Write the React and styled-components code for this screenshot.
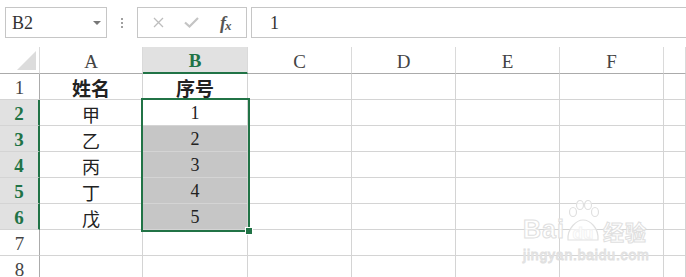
import React from "react"
import styled, { createGlobalStyle } from "styled-components"

const GREEN = "#217346"
const GRID = "#d4d4d4"
const SERIF = `"Liberation Serif", "Noto Sans CJK SC", serif`

const GlobalStyle = createGlobalStyle`
  html, body {
    margin: 0;
    padding: 0;
    background: #fff;
    overflow: hidden;
  }
  body {
    font-family: ${SERIF};
    color: #333;
  }
`

const Page = styled.div`
  position: relative;
  width: 686px;
  height: 277px;
  overflow: hidden;
`

const FormulaBar = styled.div`
  display: flex;
  align-items: stretch;
  height: 31px;
  padding: 7px 0 0 5px;
  box-sizing: content-box;
`

const NameBox = styled.div`
  width: 102px;
  box-sizing: border-box;
  border: 1px solid #c6c6c6;
  display: flex;
  align-items: center;
  justify-content: space-between;
  padding: 1px 5px 0 6px;
  font-size: 18px;
  color: #333;
`

const DropArrow = styled.span`
  width: 0;
  height: 0;
  border-left: 4px solid transparent;
  border-right: 4px solid transparent;
  border-top: 4px solid #777;
`

const Grip = styled.div`
  width: 30px;
  display: flex;
  flex-direction: column;
  align-items: center;
  justify-content: center;
  gap: 2px;
  span {
    width: 2px;
    height: 2px;
    background: #a0a0a0;
  }
`

const ButtonBox = styled.div`
  width: 110px;
  box-sizing: border-box;
  border: 1px solid #c6c6c6;
  display: flex;
  align-items: center;
  justify-content: space-around;
  padding: 0 4px;
`

const IconButton = styled.span`
  display: flex;
  align-items: center;
  justify-content: center;
  width: 28px;
  height: 20px;
`

const Fx = styled.span`
  font-family: ${SERIF};
  font-style: italic;
  font-weight: 700;
  font-size: 18px;
  line-height: 1;
  color: #555;
  letter-spacing: -1px;
  sub {
    font-size: 13px;
    vertical-align: -1px;
  }
`

const FormulaInput = styled.div`
  flex: 1;
  margin-left: 4px;
  box-sizing: border-box;
  border: 1px solid #c6c6c6;
  border-right: none;
  display: flex;
  align-items: center;
  padding: 1px 0 0 18px;
  font-size: 18px;
  color: #333;
`

const Sheet = styled.div`
  margin-top: 9px;
  display: grid;
  grid-template-columns: 40px 103px 105px 104px 104px 104px 104px 1fr;
  grid-template-rows: 27px repeat(8, 26px);
`

const Place = ({ $r, $c }) => `
  grid-row: ${$r};
  grid-column: ${$c};
`

const Corner = styled.div`
  ${Place}
  position: relative;
  border-right: 1px solid #dadada;
  border-bottom: 1px solid #ababab;
  &::after {
    content: "";
    position: absolute;
    right: 3px;
    bottom: 3px;
    width: 0;
    height: 0;
    border-left: 19px solid transparent;
    border-bottom: 19px solid #dcdcdc;
  }
`

const ColHeader = styled.div`
  ${Place}
  box-sizing: border-box;
  display: flex;
  align-items: center;
  justify-content: center;
  padding-top: 3px;
  font-size: 19px;
  background: ${p => (p.$active ? "#e1e1e1" : "#fff")};
  color: ${p => (p.$active ? GREEN : "#444")};
  font-weight: ${p => (p.$active ? 700 : 400)};
  border-right: 1px solid #dadada;
  border-bottom: ${p => (p.$active ? `2px solid ${GREEN}` : "1px solid #ababab")};
`

const RowHeader = styled.div`
  ${Place}
  box-sizing: border-box;
  display: flex;
  align-items: center;
  justify-content: center;
  padding-top: 2px;
  font-size: 19px;
  background: ${p => (p.$active ? "#e1e1e1" : "#fff")};
  color: ${p => (p.$active ? GREEN : "#444")};
  font-weight: ${p => (p.$active ? 700 : 400)};
  border-right: ${p => (p.$active ? `2px solid ${GREEN}` : "1px solid #ababab")};
  border-bottom: 1px solid ${GRID};
`

const Cell = styled.div`
  ${Place}
  box-sizing: border-box;
  display: flex;
  align-items: center;
  justify-content: center;
  padding-top: 2px;
  font-family: ${SERIF};
  font-size: ${p => (p.$bold ? "19px" : "18px")};
  font-weight: ${p => (p.$bold ? 700 : 400)};
  color: #222;
  background: ${p => (p.$shaded ? "#c6c6c6" : "#fff")};
  border-right: 1px solid ${GRID};
  border-bottom: 1px solid ${GRID};
`

const Selection = styled.div`
  grid-column: 3;
  grid-row: 3 / 8;
  position: relative;
  margin: -2px -2px -2px -2px;
  border: 2px solid ${GREEN};
  pointer-events: none;
`

const FillHandle = styled.span`
  position: absolute;
  right: -5px;
  bottom: -5px;
  width: 6px;
  height: 6px;
  background: ${GREEN};
  border: 1px solid #fff;
`

const Watermark = styled.div`
  position: absolute;
  left: 523px;
  top: 200px;
  width: 130px;
  color: rgba(255, 255, 255, 0.8);
  -webkit-text-stroke: 1px #e0e0e0;
  font-family: "Liberation Sans", sans-serif;
  pointer-events: none;
`

const MarkTop = styled.div`
  display: flex;
  align-items: flex-end;
  font-size: 25px;
  font-weight: 700;
  line-height: 1;
  height: 42px;
  letter-spacing: 1px;
`

const Paw = styled.span`
  position: relative;
  display: flex;
  align-items: flex-end;
  justify-content: center;
  width: 36px;
  height: 42px;
  font-size: 17px;
  letter-spacing: 0;
  svg {
    position: absolute;
    left: 0;
    top: 0;
  }
`

const MarkCn = styled.span`
  font-family: "Noto Sans CJK SC", sans-serif;
  font-size: 21px;
  margin-left: 2px;
`

const MarkUrl = styled.div`
  font-size: 14px;
  letter-spacing: 0.8px;
  margin-top: 5px;
`

const columns = ["A", "B", "C", "D", "E", "F", ""]
const rows = [
  { name: "姓名", num: "序号", head: true },
  { name: "甲", num: "1" },
  { name: "乙", num: "2" },
  { name: "丙", num: "3" },
  { name: "丁", num: "4" },
  { name: "戊", num: "5" },
  { name: "", num: "" },
  { name: "", num: "" },
]

const App = () => (
  <Page>
    <GlobalStyle />
    <FormulaBar>
      <NameBox>
        B2
        <DropArrow />
      </NameBox>
      <Grip>
        <span />
        <span />
        <span />
      </Grip>
      <ButtonBox>
        <IconButton>
          <svg width="11" height="11" viewBox="0 0 11 11">
            <path d="M1 1L10 10M10 1L1 10" stroke="#bdbdbd" strokeWidth="1.3" fill="none" />
          </svg>
        </IconButton>
        <IconButton>
          <svg width="15" height="11" viewBox="0 0 15 11">
            <path d="M1 5.5L5.5 9.5L14 1" stroke="#c4c4c4" strokeWidth="2.2" fill="none" />
          </svg>
        </IconButton>
        <IconButton>
          <Fx>
            f<sub>x</sub>
          </Fx>
        </IconButton>
      </ButtonBox>
      <FormulaInput>1</FormulaInput>
    </FormulaBar>

    <Sheet>
      <Corner $r={1} $c={1} />
      {columns.map((c, i) => (
        <ColHeader key={i} $r={1} $c={i + 2} $active={c === "B"}>
          {c}
        </ColHeader>
      ))}
      {rows.map((r, i) => {
        const n = i + 1
        const gr = n + 1
        const active = n >= 2 && n <= 6
        return (
          <React.Fragment key={n}>
            <RowHeader $r={gr} $c={1} $active={active}>
              {n}
            </RowHeader>
            <Cell $r={gr} $c={2} $bold={r.head}>
              {r.name}
            </Cell>
            <Cell $r={gr} $c={3} $bold={r.head} $shaded={n >= 3 && n <= 6}>
              {r.num}
            </Cell>
            {[4, 5, 6, 7, 8].map(c => (
              <Cell key={c} $r={gr} $c={c} />
            ))}
          </React.Fragment>
        )
      })}
      <Selection>
        <FillHandle />
      </Selection>
    </Sheet>

    <Watermark>
      <MarkTop>
        Bai
        <Paw>
          <svg width="36" height="42" viewBox="0 0 36 42">
            <g fill="rgba(255,255,255,0.6)" stroke="#e0e0e0" strokeWidth="1.2">
              <ellipse cx="8" cy="12" rx="3.5" ry="4.5" />
              <ellipse cx="15" cy="5" rx="3.5" ry="4.5" />
              <ellipse cx="23" cy="5" rx="3.5" ry="4.5" />
              <ellipse cx="30" cy="12" rx="3.5" ry="4.5" />
              <path d="M3 40 C2 28 12 20 18 20 C25 20 34 28 33 40 Z" />
            </g>
          </svg>
          du
        </Paw>
        <MarkCn>经验</MarkCn>
      </MarkTop>
      <MarkUrl>jingyan.baidu.com</MarkUrl>
    </Watermark>
  </Page>
)

export default App
